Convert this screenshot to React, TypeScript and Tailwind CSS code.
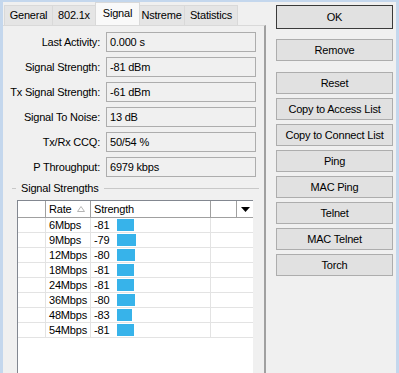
import React from 'react'

const fields = [
    ['Last Activity:', '0.000 s'],
    ['Signal Strength:', '-81 dBm'],
    ['Tx Signal Strength:', '-61 dBm'],
    ['Signal To Noise:', '13 dB'],
    ['Tx/Rx CCQ:', '50/54 %'],
    ['P Throughput:', '6979 kbps'],
]

const rates = [
    ['6Mbps', -81],
    ['9Mbps', -79],
    ['12Mbps', -80],
    ['18Mbps', -81],
    ['24Mbps', -81],
    ['36Mbps', -80],
    ['48Mbps', -83],
    ['54Mbps', -81],
] as const

const buttons = ['Copy to Access List', 'Copy to Connect List', 'Ping', 'MAC Ping', 'Telnet', 'MAC Telnet', 'Torch']

const tabs = [
    { name: 'General', w: 'w-[49px]' },
    { name: '802.1x', w: 'w-[44px]' },
    { name: 'Signal', w: 'w-[45px]', active: true },
    { name: 'Nstreme', w: 'w-[47px]' },
    { name: 'Statistics', w: 'w-[54px]' },
]

const Btn = ({ label, strong }: { label: string; strong?: boolean }) => (
    <div className={`h-[22px] w-[117px] flex items-center justify-center bg-[#e1e1e1] border ${strong ? 'border-[#3a3a3a]' : 'border-[#adadad]'}`}>
        {label}
    </div>
)

export default function App() {
    return (
        <div className="w-[399px] h-[373px] overflow-hidden bg-[#c4d7ed] px-[3px] pt-[2px] font-['Liberation_Sans',Arial,sans-serif] text-[11px] tracking-[-0.2px] text-black leading-none">
            <div className="h-full bg-[#f0f0f0] flex">
                {/* left: tab control */}
                <div className="w-[263px] flex flex-col">
                    <div className="h-[23px] flex items-end pl-[1px]">
                        {tabs.map(t => (
                            <div
                                key={t.name}
                                className={`${t.w} flex items-center justify-center border border-b-0 border-[#d9d9d9] ${t.active ? 'h-[23px] bg-[#f9f9f9] -mx-[1px] z-10 pb-[2px]' : 'h-[20px] bg-[#e5e5e5] -ml-[1px] first:ml-0'}`}
                            >
                                {t.name}
                            </div>
                        ))}
                    </div>
                    <div className="flex-1 border-t border-r-2 border-[#d9d9d9] border-r-[#a0a0a0] bg-[#f0f0f0]">
                        <div className="pt-[6px] flex flex-col gap-[5px]">
                            {fields.map(([label, value]) => (
                                <div key={label} className="flex items-center">
                                    <div className="w-[97px] text-right">{label}</div>
                                    <div className="ml-[6px] w-[150px] h-[20px] border border-[#adadad] bg-[#f0f0f0] flex items-center pl-[3px]">
                                        {value}
                                    </div>
                                </div>
                            ))}
                        </div>
                        <div className="mt-[4px] h-[14px] flex items-center">
                            <div className="ml-[9px] w-[4px] border-t border-[#c8c8c8]" />
                            <div className="px-[5px]">Signal Strengths</div>
                            <div className="w-[155px] border-t border-[#c8c8c8]" />
                        </div>
                        <div className="mt-[5px] ml-[14px] w-[236px] h-[200px] bg-white border-l border-t border-[#828790]">
                            <div className="h-[17px] grid grid-cols-[28px_45px_120px_26px_16px] border-b border-[#a0a0a0]">
                                <div className="border-r border-[#a0a0a0]" />
                                <div className="border-r border-[#a0a0a0] flex items-center pl-[3px]">
                                    Rate
                                    <svg width="8" height="6" viewBox="0 0 8 6" className="ml-[6px]">
                                        <path d="M4 0.5 L7.5 5.5 L0.5 5.5 Z" fill="none" stroke="#b4b4b4" strokeWidth="1" />
                                    </svg>
                                </div>
                                <div className="border-r border-[#a0a0a0] flex items-center pl-[3px]">Strength</div>
                                <div className="border-r border-[#a0a0a0]" />
                                <div className="flex items-center justify-center">
                                    <svg width="9" height="5" viewBox="0 0 9 5">
                                        <path d="M0 0 L9 0 L4.5 5 Z" fill="#000" />
                                    </svg>
                                </div>
                            </div>
                            {rates.map(([rate, dbm]) => (
                                <div key={rate} className="h-[15px] grid grid-cols-[28px_45px_120px_42px] border-b border-[#e3e3e3]">
                                    <div className="border-r border-[#e3e3e3]" />
                                    <div className="border-r border-[#e3e3e3] flex items-center pl-[3px]">{rate}</div>
                                    <div className="border-r border-[#e3e3e3] flex items-center pl-[3px]">
                                        <span className="w-[23px]">{dbm}</span>
                                        <span className="h-[12px] bg-[#37b3ea]" style={{ width: `${17 + (dbm + 81)}px` }} />
                                    </div>
                                    <div />
                                </div>
                            ))}
                        </div>
                    </div>
                </div>
                {/* right: buttons */}
                <div className="flex-1 flex flex-col items-center pt-[3px] pl-[8px] pr-[1px]">
                    <div className="h-[24px] w-[117px] flex items-center justify-center bg-[#e1e1e1] border border-[#3a3a3a]">OK</div>
                    <div className="mt-[10px]"><Btn label="Remove" /></div>
                    <div className="mt-[11px] flex flex-col gap-[4px]">
                        <Btn label="Reset" />
                        {buttons.map(b => <Btn key={b} label={b} />)}
                    </div>
                </div>
            </div>
        </div>
    )
}
